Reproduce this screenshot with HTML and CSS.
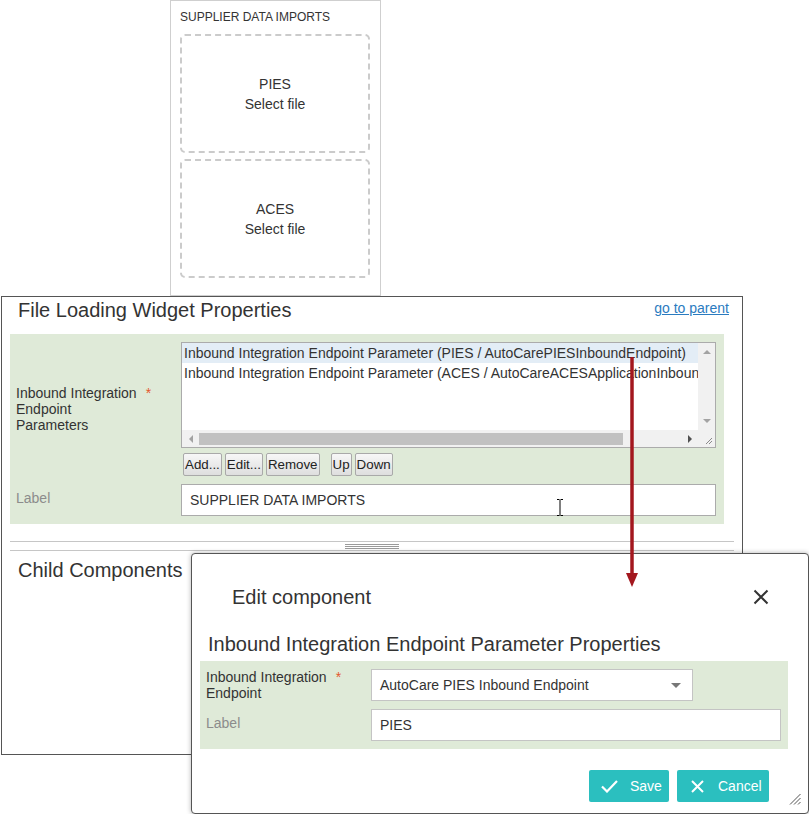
FILE: index.html
```html
<!DOCTYPE html>
<html>
<head>
<meta charset="utf-8">
<title>File Loading Widget</title>
<link rel="stylesheet" href="styles.css">
</head>
<body>
<div class="widget">
  <div class="widget-title">SUPPLIER DATA IMPORTS</div>
  <div class="drop"><span>PIES</span><span>Select file</span></div>
  <div class="drop"><span>ACES</span><span>Select file</span></div>
</div>

<div class="props">
  <div class="props-head">
    <h2 class="title">File Loading Widget Properties</h2>
    <a class="parent-link" href="#">go to parent</a>
  </div>
  <div class="form">
    <div class="lbl"><span>Inbound Integration<br>Endpoint<br>Parameters</span><span class="star">*</span></div>
    <div class="field">
      <div class="listbox">
        <div class="list-items">
          <div class="item sel">Inbound Integration Endpoint Parameter (PIES / AutoCarePIESInboundEndpoint)</div>
          <div class="item">Inbound Integration Endpoint Parameter (ACES / AutoCareACESApplicationInboundEndpoint)</div>
        </div>
        <div class="vscroll"><span class="tri up"></span><span class="tri down"></span></div>
        <div class="hscroll"><span class="hbtn"><span class="tri left"></span></span><span class="thumb"></span><span class="hbtn end"><span class="tri right"></span></span></div>
        <div class="corner"><svg width="10" height="10" viewBox="0 0 10 10"><path d="M9 3 L3 9 M9 6 L6 9" stroke="#8a8a8a" stroke-width="1"/></svg></div>
      </div>
      <div class="btns">
        <button class="btn">Add...</button>
        <button class="btn">Edit...</button>
        <button class="btn">Remove</button>
        <button class="btn sp">Up</button>
        <button class="btn">Down</button>
      </div>
    </div>
    <div class="lbl muted">Label</div>
    <div class="field"><div class="input">SUPPLIER DATA IMPORTS</div></div>
  </div>
  <div class="splitter"><div class="grip"></div></div>
  <h2 class="title child">Child Components</h2>
</div>

<div class="dialog">
  <div class="dlg-head">
    <h2 class="title">Edit component</h2>
    <svg class="close" width="16" height="16" viewBox="0 0 16 16"><path d="M1.5 1.5 L14.5 14.5 M14.5 1.5 L1.5 14.5" stroke="#333" stroke-width="2"/></svg>
  </div>
  <h2 class="title dlg-sub">Inbound Integration Endpoint Parameter Properties</h2>
  <div class="form dlg-form">
    <div class="lbl"><span>Inbound Integration<br>Endpoint</span><span class="star">*</span></div>
    <div class="field"><div class="select"><span>AutoCare PIES Inbound Endpoint</span><span class="caret"></span></div></div>
    <div class="lbl muted">Label</div>
    <div class="field"><div class="input dlg-input">PIES</div></div>
  </div>
  <div class="dlg-foot">
    <button class="tbtn save"><svg width="17" height="13" viewBox="0 0 17 13"><path d="M1 6.5 L6 11.5 L16 1" fill="none" stroke="#fff" stroke-width="2.2"/></svg><span>Save</span></button>
    <button class="tbtn cancel"><svg width="13" height="13" viewBox="0 0 13 13"><path d="M1 1 L12 12 M12 1 L1 12" stroke="#fff" stroke-width="2"/></svg><span>Cancel</span></button>
  </div>
  <svg class="dlg-grip" width="12" height="12" viewBox="0 0 12 12"><path d="M11.5 1 L1 11.5 M11.5 5 L5 11.5 M11.5 9 L9 11.5" stroke="#555" stroke-width="1"/></svg>
</div>

<svg class="arrow" width="14" height="234" viewBox="0 0 14 234"><line x1="7" y1="2" x2="7" y2="220" stroke="#a3171e" stroke-width="3.5"/><polygon points="1,218 13,218 7,232" fill="#a3171e"/></svg>

<svg class="ibeam" width="8" height="17" viewBox="0 0 8 17"><path d="M1 0.5 H3.5 M4.5 0.5 H7 M4 1 V16 M1 16.5 H3.5 M4.5 16.5 H7" stroke="#000" stroke-width="1"/></svg>
</body>
</html>
```

FILE: styles.css
```css
* { box-sizing: border-box; }

body {
  margin: 0;
  width: 809px;
  height: 814px;
  overflow: hidden;
  position: relative;
  background: #fff;
  color: #333;
  font-family: "Liberation Sans", Arial, sans-serif;
}

/* ---------- widget preview ---------- */
.widget {
  position: absolute;
  left: 170px;
  top: 0;
  width: 211px;
  height: 296px;
  border: 1px solid #cfcfcf;
  padding: 9px 10px 0 9px;
  display: flex;
  flex-direction: column;
}
.widget-title {
  font-size: 12px;
  line-height: 14px;
  margin-bottom: 10px;
}
.drop {
  width: 190px;
  height: 119px;
  margin-bottom: 6px;
  border: 2px dashed #cbcbcb;
  border-radius: 5px;
  display: flex;
  flex-direction: column;
  align-items: center;
  justify-content: center;
  font-size: 14px;
  line-height: 20px;
}

/* ---------- properties panel ---------- */
.props {
  position: absolute;
  left: 1px;
  top: 296px;
  width: 742px;
  height: 459px;
  border: 1px solid #555;
  background: #fff;
}
.props-head {
  display: flex;
  justify-content: space-between;
  align-items: flex-start;
  padding: 1px 13px 0 16px;
}
.title {
  margin: 0;
  font-size: 20px;
  line-height: 24px;
  font-weight: normal;
  color: #333;
}
.parent-link {
  margin-top: 2px;
  font-size: 14px;
  line-height: 16px;
  color: #2b7bbf;
  text-decoration: underline;
}

.form {
  margin: 12px 0 0 8px;
  width: 714px;
  background: #dfead8;
  display: grid;
  grid-template-columns: 171px 1fr;
  row-gap: 8px;
  padding: 8px 8px 8px 0;
  align-items: center;
}
.lbl {
  display: flex;
  align-items: flex-start;
  padding-left: 6px;
  font-size: 14px;
  line-height: 16px;
  color: #333;
}
.lbl.muted {
  color: #8c8c8c;
  margin-bottom: 4px;
}
.star {
  color: #e4572e;
  margin-left: 9px;
}
.field {
  display: flex;
  flex-direction: column;
}

.listbox {
  width: 535px;
  height: 106px;
  border: 1px solid #ababab;
  background: #fff;
  display: grid;
  grid-template-columns: 1fr 17px;
  grid-template-rows: 1fr 17px;
}
.list-items {
  overflow: hidden;
  font-size: 14px;
  line-height: 20px;
}
.item {
  white-space: nowrap;
  padding-left: 2px;
}
.item.sel { background: #e3edf6; }

.vscroll {
  background: #f1f1f1;
  display: flex;
  flex-direction: column;
  justify-content: space-between;
  align-items: center;
  padding: 7px 0;
}
.tri {
  width: 0;
  height: 0;
  display: block;
}
.tri.up { border-left: 4px solid transparent; border-right: 4px solid transparent; border-bottom: 4px solid #a3a3a3; }
.tri.down { border-left: 4px solid transparent; border-right: 4px solid transparent; border-top: 4px solid #a3a3a3; }
.tri.left { border-top: 4px solid transparent; border-bottom: 4px solid transparent; border-right: 4px solid #a3a3a3; }
.tri.right { border-top: 4px solid transparent; border-bottom: 4px solid transparent; border-left: 4px solid #505050; }

.hscroll {
  background: #f1f1f1;
  display: flex;
  align-items: center;
}
.hbtn {
  width: 17px;
  height: 17px;
  display: flex;
  align-items: center;
  justify-content: center;
}
.hbtn.end { margin-left: auto; }
.thumb {
  width: 424px;
  height: 12px;
  background: #c1c1c1;
}
.corner {
  background: #f1f1f1;
  display: flex;
  align-items: flex-end;
  justify-content: flex-end;
  padding: 0 2px 2px 0;
}

.btns {
  display: flex;
  margin: 5px 0 0 2px;
  gap: 3px;
}
.btn {
  height: 23px;
  padding: 0 1px;
  font-family: "Liberation Sans", Arial, sans-serif;
  font-size: 13.333px;
  color: #222;
  background: linear-gradient(#f7f7f7, #dedede);
  border: 1px solid #a9a9a9;
  border-radius: 2px;
}
.btn.sp { margin-left: 8px; }

.input {
  height: 32px;
  border: 1px solid #ababab;
  background: #fff;
  padding-left: 8px;
  font-size: 14px;
  line-height: 30px;
  color: #333;
}

.splitter {
  margin: 17px 0 0 8px;
  width: 724px;
  height: 10px;
  border-top: 1px solid #c6c6c6;
  border-bottom: 1px solid #c6c6c6;
  display: flex;
  justify-content: center;
  align-items: center;
}
.grip {
  width: 54px;
  height: 5px;
  background: repeating-linear-gradient(#9a9a9a 0 1px, transparent 1px 2px);
}
.title.child {
  margin: 7px 0 0 16px;
}

/* ---------- dialog ---------- */
.dialog {
  position: absolute;
  left: 191px;
  top: 553px;
  width: 618px;
  height: 261px;
  background: #fff;
  border: 1px solid #555;
  border-radius: 4px;
  box-shadow: 0 0 5px rgba(0, 0, 0, 0.3);
}
.dlg-head {
  display: flex;
  justify-content: space-between;
  align-items: center;
  padding: 31px 39px 0 40px;
}
.dlg-sub {
  margin: 23px 0 0 16px;
}
.dlg-form {
  margin: 5px 0 0 8px;
  width: 588px;
  padding: 8px 7px 8px 0;
}
.select {
  width: 322px;
  height: 32px;
  border: 1px solid #c4c4c4;
  background: #fff;
  display: flex;
  align-items: center;
  justify-content: space-between;
  padding: 0 11px 0 8px;
  font-size: 14px;
  color: #333;
}
.caret {
  width: 0;
  height: 0;
  border-left: 5px solid transparent;
  border-right: 5px solid transparent;
  border-top: 5px solid #777;
}
.dlg-input {
  border-color: #c4c4c4;
}

.dlg-foot {
  display: flex;
  justify-content: flex-end;
  gap: 8px;
  margin-top: 21px;
  padding-right: 39px;
}
.tbtn {
  height: 32px;
  display: flex;
  align-items: center;
  background: #2bbfbf;
  border: none;
  border-radius: 2px;
  color: #fff;
  font-family: "Liberation Sans", Arial, sans-serif;
  font-size: 14px;
}
.tbtn.save { width: 80px; padding: 0 7px 0 12px; gap: 12px; }
.tbtn.cancel { width: 92px; padding: 0 7px 0 14px; gap: 14px; }

.dlg-grip {
  position: absolute;
  right: 7px;
  bottom: 8px;
}

/* ---------- overlays ---------- */
.arrow {
  position: absolute;
  left: 625px;
  top: 355px;
}
.ibeam {
  position: absolute;
  left: 556px;
  top: 499px;
}
```
